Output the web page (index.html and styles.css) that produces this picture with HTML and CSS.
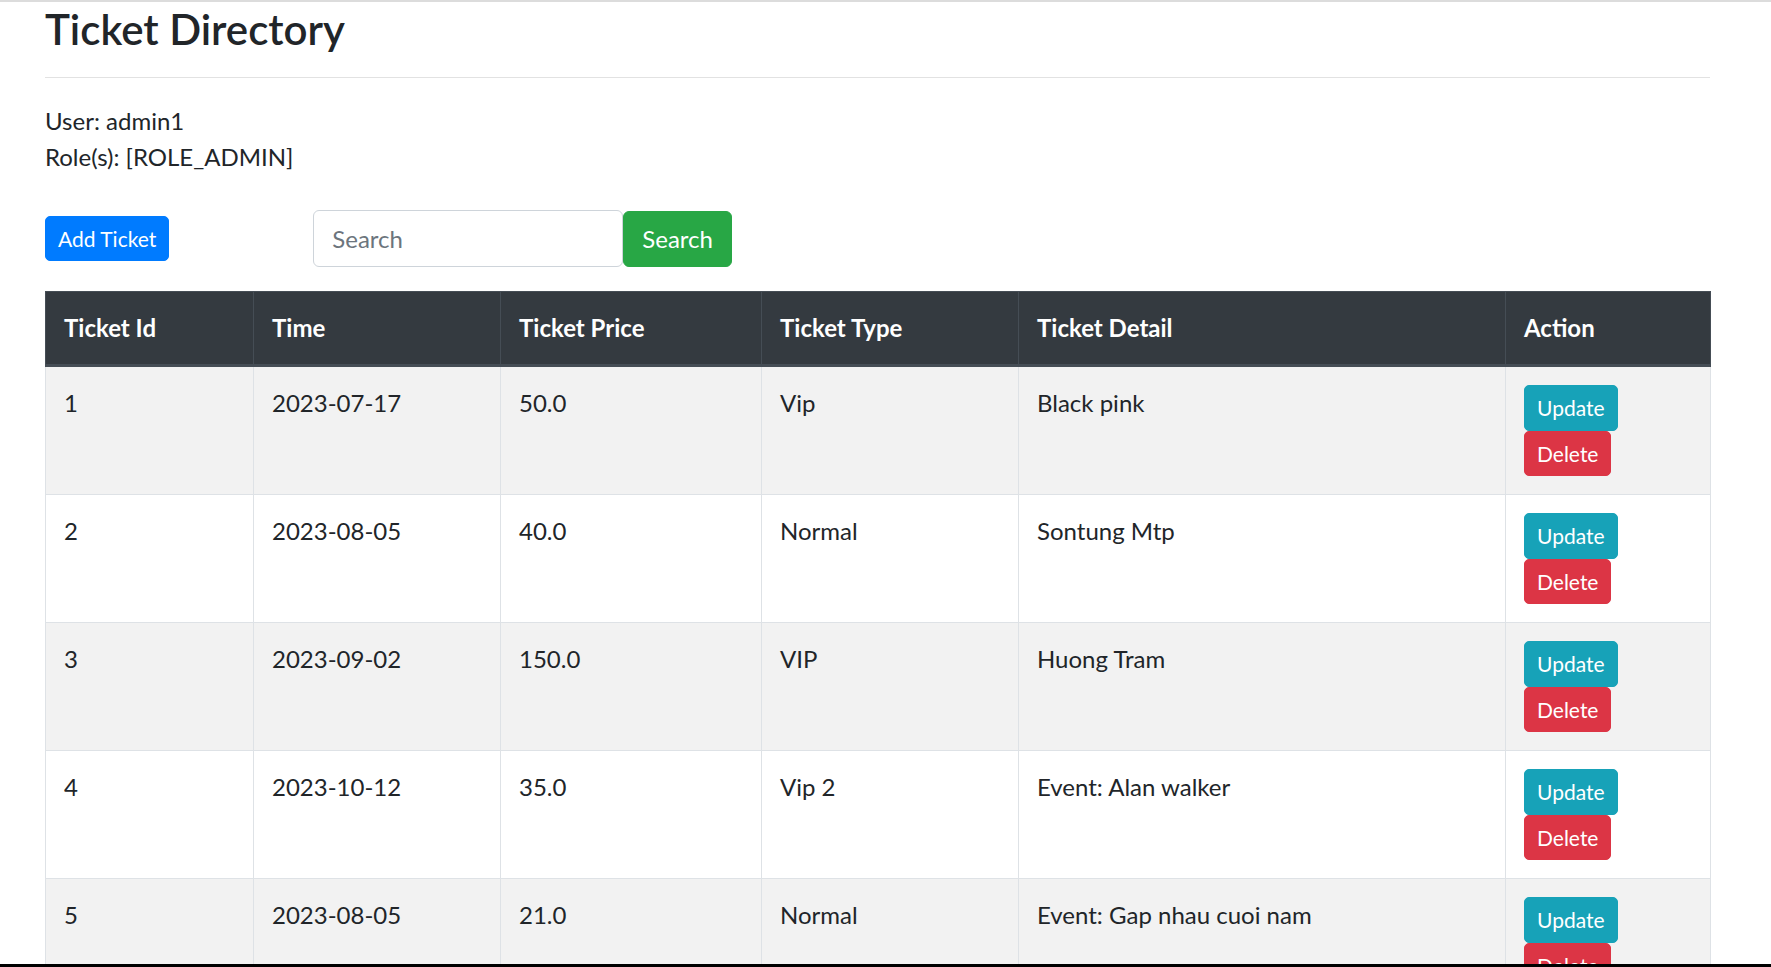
FILE: index.html
```html
<!DOCTYPE html>
<html lang="en">
<head>
<meta charset="utf-8">
<title>Ticket Directory</title>
<link rel="stylesheet" href="styles.css">
</head>
<body>
<div class="container">
  <h3 class="title">Ticket Directory</h3>
  <hr class="rule">
  <div class="userinfo">
    <div>User: admin1</div>
    <div>Role(s): [ROLE_ADMIN]</div>
  </div>
  <div class="toolbar">
    <a class="btn btn-sm btn-primary" href="#">Add Ticket</a>
    <form class="search-form">
      <input class="search-input" type="text" placeholder="Search">
      <button class="btn btn-success" type="button">Search</button>
    </form>
  </div>
  <table class="tickets">
    <colgroup>
      <col class="c-id"><col class="c-time"><col class="c-price"><col class="c-type"><col class="c-detail"><col class="c-action">
    </colgroup>
    <thead>
      <tr>
        <th>Ticket Id</th><th>Time</th><th>Ticket Price</th><th>Ticket Type</th><th>Ticket Detail</th><th>Action</th>
      </tr>
    </thead>
    <tbody>
      <tr>
        <td>1</td><td>2023-07-17</td><td>50.0</td><td>Vip</td><td>Black pink</td>
        <td><div class="actions"><a class="btn btn-sm btn-info" href="#">Update</a><a class="btn btn-sm btn-danger" href="#">Delete</a></div></td>
      </tr>
      <tr>
        <td>2</td><td>2023-08-05</td><td>40.0</td><td>Normal</td><td>Sontung Mtp</td>
        <td><div class="actions"><a class="btn btn-sm btn-info" href="#">Update</a><a class="btn btn-sm btn-danger" href="#">Delete</a></div></td>
      </tr>
      <tr>
        <td>3</td><td>2023-09-02</td><td>150.0</td><td>VIP</td><td>Huong Tram</td>
        <td><div class="actions"><a class="btn btn-sm btn-info" href="#">Update</a><a class="btn btn-sm btn-danger" href="#">Delete</a></div></td>
      </tr>
      <tr>
        <td>4</td><td>2023-10-12</td><td>35.0</td><td>Vip 2</td><td>Event: Alan walker</td>
        <td><div class="actions"><a class="btn btn-sm btn-info" href="#">Update</a><a class="btn btn-sm btn-danger" href="#">Delete</a></div></td>
      </tr>
      <tr>
        <td>5</td><td>2023-08-05</td><td>21.0</td><td>Normal</td><td>Event: Gap nhau cuoi nam</td>
        <td><div class="actions"><a class="btn btn-sm btn-info" href="#">Update</a><a class="btn btn-sm btn-danger" href="#">Delete</a></div></td>
      </tr>
    </tbody>
  </table>
</div>
<div class="frame-bottom"></div>
</body>
</html>
```

FILE: styles.css
```css
html, body {
  margin: 0;
  padding: 0;
}
body {
  background: #ffffff;
  color: #212529;
  font-family: "Lato", "Open Sans", sans-serif;
  font-size: 24px;
  line-height: 36px;
  border-top: 2px solid #dcdcdc;
}
.container {
  width: 1665px;
  padding: 2px 0 0 45px;
}
.title {
  margin: 0;
  font-size: 42px;
  line-height: 50px;
  font-weight: 600;
  color: #212529;
}
.rule {
  margin: 23px 0 0 0;
  border: 0;
  border-top: 1px solid #e2e2e2;
  height: 0;
}
.userinfo {
  margin-top: 25px;
}
.toolbar {
  display: flex;
  align-items: center;
  margin-top: 35px;
  height: 57px;
}
.search-form {
  display: flex;
  align-items: center;
  margin: 0 0 0 144px;
}
.search-input {
  box-sizing: border-box;
  width: 310px;
  height: 57px;
  padding: 0 18px;
  border: 1px solid #ced4da;
  border-radius: 6px;
  font-family: inherit;
  font-size: 24px;
  color: #495057;
  background: #fff;
  outline: none;
}
.search-input::placeholder {
  color: #6c757d;
}
.btn {
  display: inline-block;
  box-sizing: border-box;
  border: 1px solid transparent;
  font-family: inherit;
  color: #fff;
  text-decoration: none;
  font-weight: 400;
  cursor: pointer;
  white-space: nowrap;
}
.btn-sm {
  font-size: 21px;
  line-height: 31.5px;
  padding: 6px 12px;
  border-radius: 5px;
}
.btn-success {
  font-size: 24px;
  line-height: 36px;
  padding: 9px 18px;
  border-radius: 6px;
  background: #28a745;
  border-color: #28a745;
  height: 56px;
}
.btn-primary {
  background: #007bff;
  border-color: #007bff;
}
.btn-info {
  background: #17a2b8;
  border-color: #17a2b8;
}
.btn-danger {
  background: #dc3545;
  border-color: #dc3545;
}
.tickets {
  margin-top: 24px;
  width: 1665px;
  table-layout: fixed;
  border-collapse: collapse;
}
.c-id { width: 208px; }
.c-time { width: 247px; }
.c-price { width: 261px; }
.c-type { width: 257px; }
.c-detail { width: 487px; }
.c-action { width: 205px; }
.tickets th {
  background: #343a40;
  color: #fff;
  font-weight: 700;
  text-align: left;
  padding: 18px;
  border: 1px solid #454d55;
  border-bottom: 3px solid #454d55;
  vertical-align: bottom;
}
.tickets td {
  padding: 18px;
  border: 1px solid #dee2e6;
  vertical-align: top;
}
.tickets tbody tr:nth-child(odd) {
  background: #f2f2f2;
}
.actions {
  display: flex;
  flex-direction: column;
  align-items: flex-start;
}
.frame-bottom {
  position: fixed;
  left: 0;
  right: 0;
  bottom: 0;
  height: 3px;
  background: #000;
}
```
